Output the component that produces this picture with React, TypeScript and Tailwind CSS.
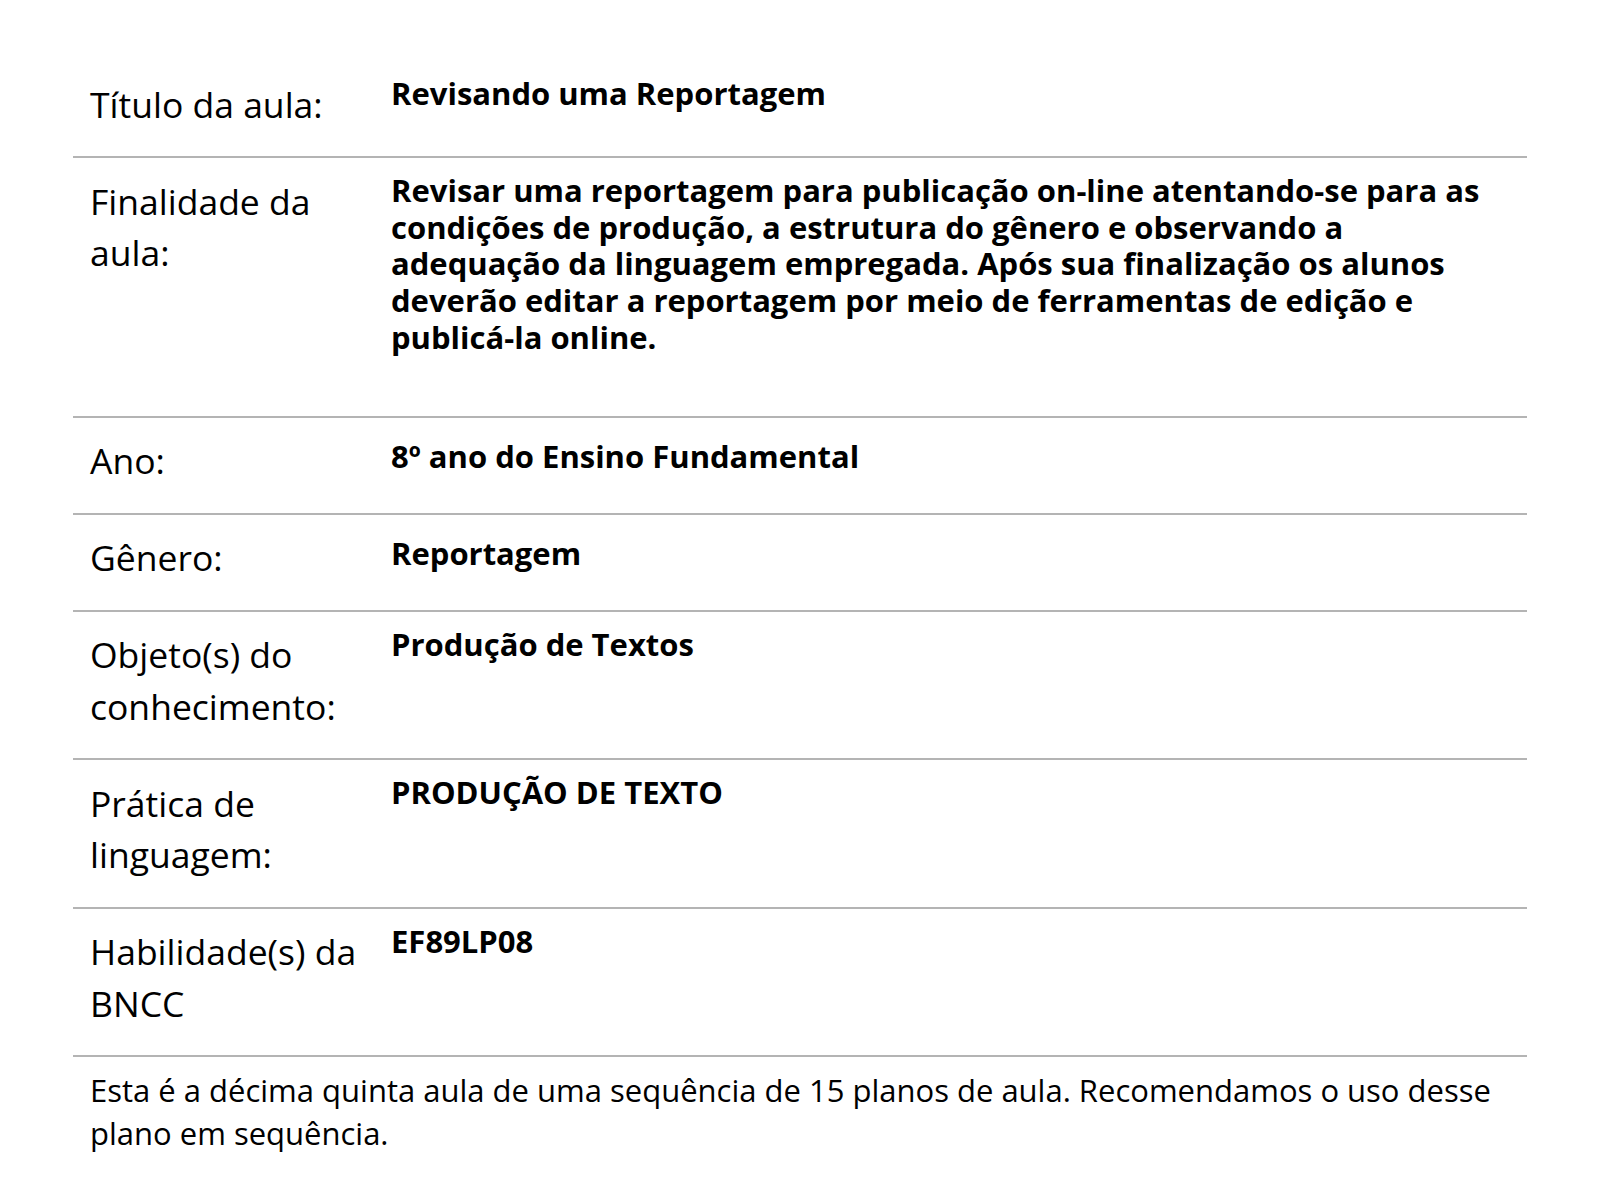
import React from "react";

type Row = { label: string; value: React.ReactNode; valuePt?: string; valuePb?: string };

const rows: Row[] = [
  { label: "Título da aula:", value: "Revisando uma Reportagem" },
  {
    label: "Finalidade da aula:",
    value:
      "Revisar uma reportagem para publicação on-line atentando-se para as condições de produção, a estrutura do gênero e observando a adequação da linguagem empregada. Após sua finalização os alunos deverão editar a reportagem por meio de ferramentas de edição e publicá-la online.",
    valuePb: "pb-[60px]",
  },
  { label: "Ano:", value: "8º ano do Ensino Fundamental", valuePt: "pt-[20px]" },
  { label: "Gênero:", value: "Reportagem", valuePt: "pt-[20px]" },
  { label: "Objeto(s) do conhecimento:", value: "Produção de Textos" },
  { label: "Prática de linguagem:", value: "PRODUÇÃO DE TEXTO" },
  { label: "Habilidade(s) da BNCC", value: "EF89LP08" },
];

export default function App() {
  return (
    <div
      className="min-h-[1200px] bg-white text-black pt-[61px]"
      style={{ fontFamily: '"Open Sans", "Noto Sans", sans-serif' }}
    >
      <div className="mx-auto w-[1454px]">
        {rows.map((r, i) => (
          <div
            key={i}
            className="grid grid-cols-[318px_1fr] border-b-2 border-[#b4b4b4]"
          >
            <div className="pl-[17px] pr-[10px] pt-[17.5px] pb-[26px] text-[35.5px] leading-[51.5px] font-normal">
              {r.label}
            </div>
            <div
              className={`pr-[17px] text-[31px] leading-[36.7px] font-bold ${r.valuePt ?? "pt-[14px]"} ${r.valuePb ?? ""}`}
            >
              {r.value}
            </div>
          </div>
        ))}
        <div className="pl-[17px] pr-[17px] pt-[12px] text-[31px] leading-[43px]">
          Esta é a décima quinta aula de uma sequência de 15 planos de aula. Recomendamos o uso desse plano em sequência.
        </div>
      </div>
    </div>
  );
}
